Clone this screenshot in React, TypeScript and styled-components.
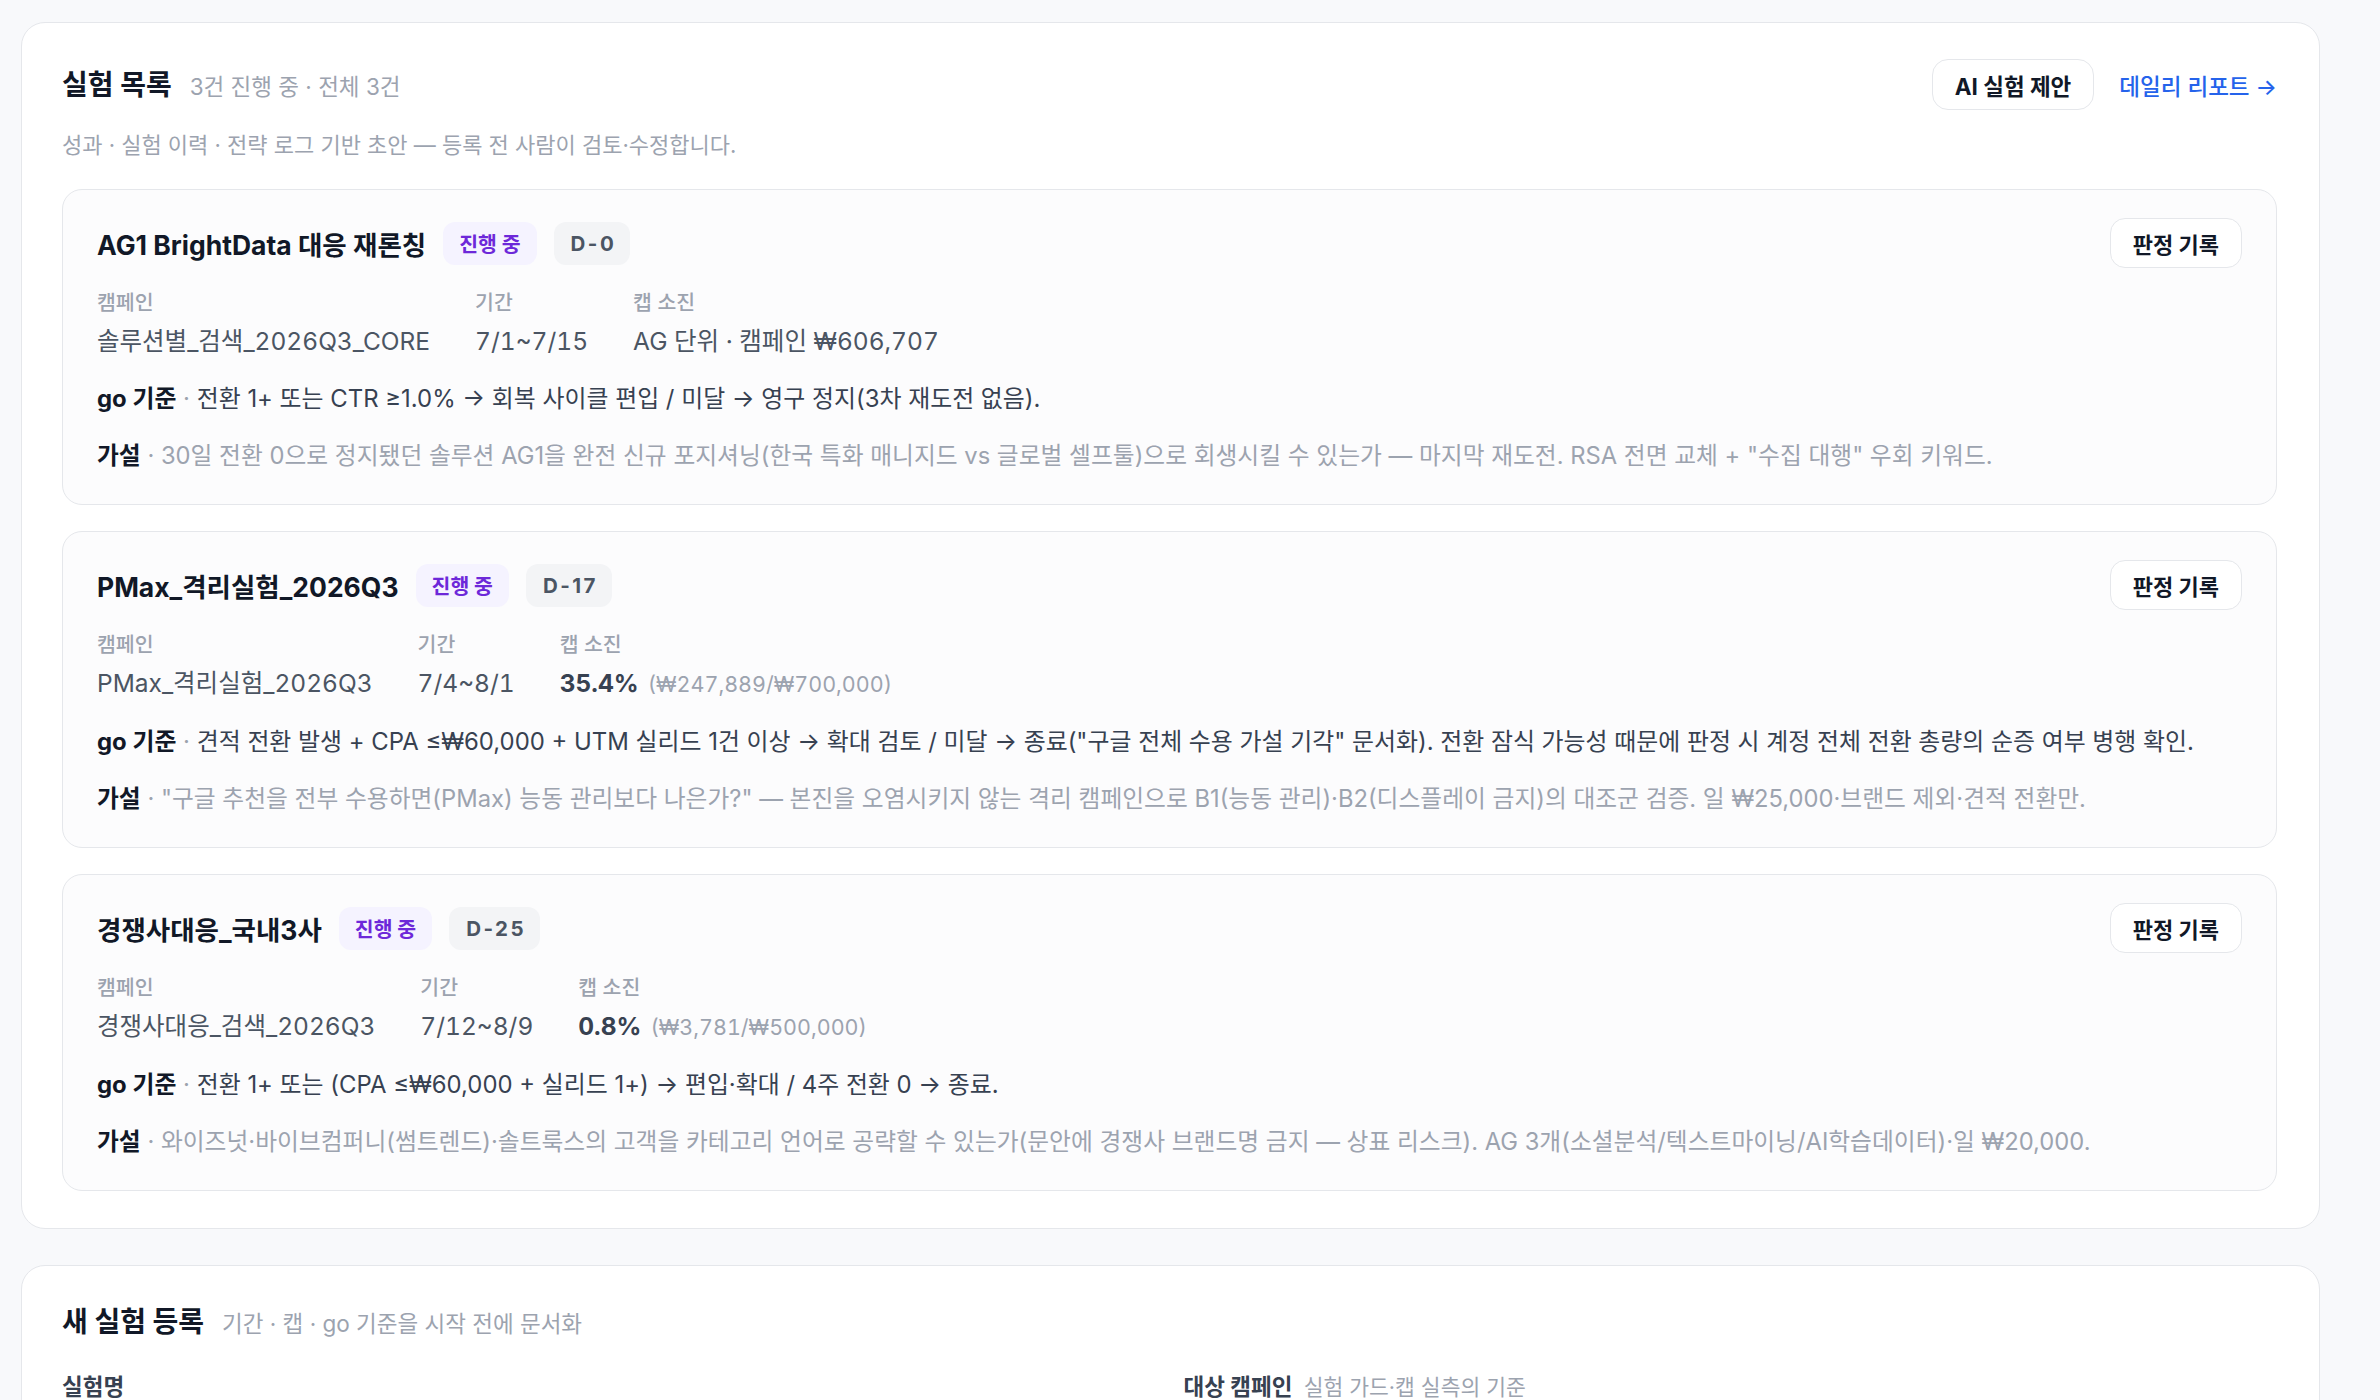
import styled, { createGlobalStyle } from 'styled-components'

const GlobalStyle = createGlobalStyle`
  * { box-sizing: border-box; }
  body {
    margin: 0;
    background: #f8f9fb;
    font-family: Inter, "Noto Sans CJK KR", sans-serif;
    color: #111827;
  }
`

type Experiment = {
  title: string
  dday: string
  campaign: string
  period: string
  capMain: string
  capBold?: boolean
  capSub?: string
  go: string
  hypothesis: string
}

const experiments: Experiment[] = [
  {
    title: 'AG1 BrightData 대응 재론칭',
    dday: 'D-0',
    campaign: '솔루션별_검색_2026Q3_CORE',
    period: '7/1~7/15',
    capMain: 'AG 단위 · 캠페인 ₩606,707',
    go: '전환 1+ 또는 CTR ≥1.0% → 회복 사이클 편입 / 미달 → 영구 정지(3차 재도전 없음).',
    hypothesis:
      '30일 전환 0으로 정지됐던 솔루션 AG1을 완전 신규 포지셔닝(한국 특화 매니지드 vs 글로벌 셀프툴)으로 회생시킬 수 있는가 — 마지막 재도전. RSA 전면 교체 + "수집 대행" 우회 키워드.',
  },
  {
    title: 'PMax_격리실험_2026Q3',
    dday: 'D-17',
    campaign: 'PMax_격리실험_2026Q3',
    period: '7/4~8/1',
    capMain: '35.4%',
    capBold: true,
    capSub: '(₩247,889/₩700,000)',
    go: '견적 전환 발생 + CPA ≤₩60,000 + UTM 실리드 1건 이상 → 확대 검토 / 미달 → 종료("구글 전체 수용 가설 기각" 문서화). 전환 잠식 가능성 때문에 판정 시 계정 전체 전환 총량의 순증 여부 병행 확인.',
    hypothesis:
      '"구글 추천을 전부 수용하면(PMax) 능동 관리보다 나은가?" — 본진을 오염시키지 않는 격리 캠페인으로 B1(능동 관리)·B2(디스플레이 금지)의 대조군 검증. 일 ₩25,000·브랜드 제외·견적 전환만.',
  },
  {
    title: '경쟁사대응_국내3사',
    dday: 'D-25',
    campaign: '경쟁사대응_검색_2026Q3',
    period: '7/12~8/9',
    capMain: '0.8%',
    capBold: true,
    capSub: '(₩3,781/₩500,000)',
    go: '전환 1+ 또는 (CPA ≤₩60,000 + 실리드 1+) → 편입·확대 / 4주 전환 0 → 종료.',
    hypothesis:
      '와이즈넛·바이브컴퍼니(썸트렌드)·솔트룩스의 고객을 카테고리 언어로 공략할 수 있는가(문안에 경쟁사 브랜드명 금지 — 상표 리스크). AG 3개(소셜분석/텍스트마이닝/AI학습데이터)·일 ₩20,000.',
  },
]

function App() {
  return (
    <Page>
      <GlobalStyle />
      <Panel>
        <PanelHeader>
          <TitleGroup>
            <PanelTitle>실험 목록</PanelTitle>
            <PanelMeta>3건 진행 중 · 전체 3건</PanelMeta>
          </TitleGroup>
          <HeaderActions>
            <OutlineButton>AI 실험 제안</OutlineButton>
            <TextLink href="#">데일리 리포트 →</TextLink>
          </HeaderActions>
        </PanelHeader>
        <PanelDesc>성과 · 실험 이력 · 전략 로그 기반 초안 — 등록 전 사람이 검토·수정합니다.</PanelDesc>

        <CardList>
          {experiments.map(exp => (
            <Card key={exp.title}>
              <CardHeader>
                <CardTitleRow>
                  <CardTitle>{exp.title}</CardTitle>
                  <StatusChip>진행 중</StatusChip>
                  <DdayChip>{exp.dday}</DdayChip>
                </CardTitleRow>
                <SmallButton>판정 기록</SmallButton>
              </CardHeader>

              <MetaRow>
                <MetaItem>
                  <MetaLabel>캠페인</MetaLabel>
                  <MetaValue>{exp.campaign}</MetaValue>
                </MetaItem>
                <MetaItem>
                  <MetaLabel>기간</MetaLabel>
                  <MetaValue>{exp.period}</MetaValue>
                </MetaItem>
                <MetaItem>
                  <MetaLabel>캡 소진</MetaLabel>
                  <MetaValue>
                    {exp.capBold ? <CapStrong>{exp.capMain}</CapStrong> : exp.capMain}
                    {exp.capSub && <CapSub>{exp.capSub}</CapSub>}
                  </MetaValue>
                </MetaItem>
              </MetaRow>

              <Criteria>
                <strong>go 기준</strong>
                <Dot> · </Dot>
                {exp.go}
              </Criteria>
              <Hypothesis>
                <strong>가설</strong> · {exp.hypothesis}
              </Hypothesis>
            </Card>
          ))}
        </CardList>
      </Panel>

      <Panel>
        <TitleGroup>
          <PanelTitle>새 실험 등록</PanelTitle>
          <PanelMeta>기간 · 캡 · go 기준을 시작 전에 문서화</PanelMeta>
        </TitleGroup>
        <FormGrid>
          <Field>
            <FieldLabel>실험명</FieldLabel>
            <Input placeholder="예: PMax_격리실험_2026Q4" />
          </Field>
          <Field>
            <FieldLabel>
              대상 캠페인 <FieldHint>실험 가드·캡 실측의 기준</FieldHint>
            </FieldLabel>
            <Input placeholder="캠페인 선택" />
          </Field>
        </FormGrid>
      </Panel>
    </Page>
  )
}

const Page = styled.div`
  display: flex;
  flex-direction: column;
  gap: 36px;
  padding: 22px 60px 40px 21px;
`

const Panel = styled.section`
  background: #ffffff;
  border: 1.5px solid #e5e7eb;
  border-radius: 24px;
  padding: 36px 42px 37px 40px;
`

const PanelHeader = styled.div`
  display: flex;
  align-items: center;
  justify-content: space-between;
`

const TitleGroup = styled.div`
  display: flex;
  align-items: baseline;
  gap: 18px;
`

const PanelTitle = styled.h2`
  margin: 0;
  font-size: 28px;
  line-height: 40px;
  font-weight: 700;
  color: #111827;
`

const PanelMeta = styled.span`
  font-size: 22.5px;
  color: #9ca3af;
`

const HeaderActions = styled.div`
  display: flex;
  align-items: center;
  gap: 25px;
`

const OutlineButton = styled.button`
  height: 51px;
  padding: 0 22px;
  background: #ffffff;
  border: 1.5px solid #e5e7eb;
  border-radius: 16px;
  font-family: inherit;
  font-size: 22.5px;
  font-weight: 700;
  color: #111827;
  cursor: pointer;
`

const SmallButton = styled(OutlineButton)`
  height: 50px;
  padding: 0 22px;
  font-size: 22px;
  border-radius: 15px;
`

const TextLink = styled.a`
  font-size: 22.5px;
  font-weight: 500;
  color: #2563eb;
  text-decoration: none;
`

const PanelDesc = styled.p`
  margin: 20px 0 0;
  font-size: 22px;
  line-height: 30px;
  color: #9ca3af;
`

const CardList = styled.div`
  display: flex;
  flex-direction: column;
  gap: 26px;
  margin-top: 29px;
`

const Card = styled.article`
  background: #fcfcfd;
  border: 1.5px solid #e5e7eb;
  border-radius: 20px;
  padding: 28px 34px 31px 34px;
`

const CardHeader = styled.div`
  display: flex;
  align-items: center;
  justify-content: space-between;
  height: 50px;
`

const CardTitleRow = styled.div`
  display: flex;
  align-items: center;
  gap: 17px;
`

const CardTitle = styled.h3`
  margin: 0;
  font-size: 26.5px;
  font-weight: 700;
  color: #111827;
`

const Chip = styled.span`
  display: inline-flex;
  align-items: center;
  height: 43px;
  padding: 0 16px;
  border-radius: 12px;
  font-size: 20.5px;
  font-weight: 700;
`

const StatusChip = styled(Chip)`
  background: #f5f3ff;
  color: #6d28d9;
`

const DdayChip = styled(Chip)`
  background: #f3f4f6;
  color: #4b5563;
  letter-spacing: 0.12em;
  padding: 0 14px 0 17px;
`

const MetaRow = styled.div`
  display: flex;
  gap: 45px;
  margin-top: 21px;
`

const MetaItem = styled.div`
  display: flex;
  flex-direction: column;
  gap: 7px;
`

const MetaLabel = styled.span`
  font-size: 20.5px;
  line-height: 28px;
  color: #9ca3af;
  font-weight: 500;
`

const MetaValue = styled.span`
  font-size: 24.5px;
  line-height: 34px;
  color: #4b5563;
  white-space: nowrap;
  font-variant-numeric: tabular-nums;
`

const CapStrong = styled.b`
  font-weight: 700;
  color: #374151;
`

const CapSub = styled.span`
  margin-left: 9px;
  font-size: 21.5px;
  color: #9ca3af;
`

const Criteria = styled.p`
  margin: 24px 0 0;
  font-size: 23.9px;
  line-height: 34px;
  color: #374151;

  strong {
    font-weight: 700;
    color: #111827;
  }
`

const Dot = styled.span`
  color: #9ca3af;
`

const Hypothesis = styled(Criteria)`
  margin-top: 23px;
  font-size: 23.75px;
  color: #9ca3af;
`

const FormGrid = styled.div`
  display: grid;
  grid-template-columns: 1fr 1fr;
  gap: 28px;
  margin-top: 30px;
`

const Field = styled.label`
  display: flex;
  flex-direction: column;
  gap: 12px;
`

const FieldLabel = styled.span`
  font-size: 22.5px;
  line-height: 30px;
  font-weight: 700;
  color: #374151;
`

const FieldHint = styled.span`
  margin-left: 6px;
  font-weight: 400;
  font-size: 21.5px;
  color: #9ca3af;
`

const Input = styled.input`
  height: 56px;
  padding: 0 18px;
  border: 1.5px solid #e5e7eb;
  border-radius: 14px;
  font-family: inherit;
  font-size: 22px;
  color: #111827;
  background: #ffffff;
`

export default App
